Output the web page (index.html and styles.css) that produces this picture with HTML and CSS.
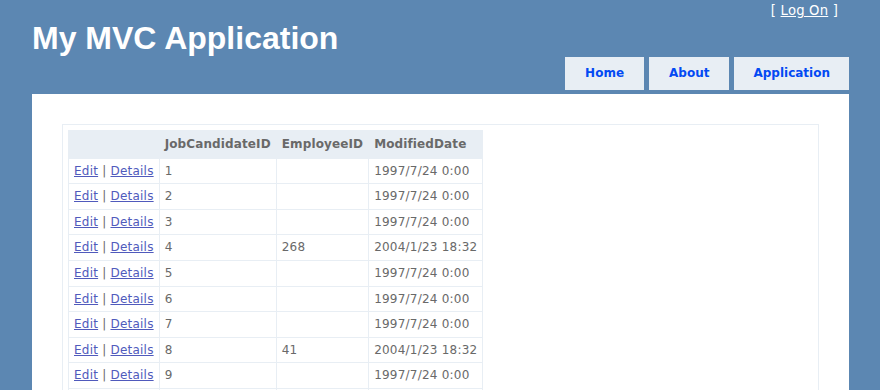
FILE: index.html
```html
<!DOCTYPE html>
<html lang="en">
<head>
    <meta charset="UTF-8">
    <title>Index</title>
    <link rel="stylesheet" href="styles.css">
</head>
<body>

<div class="page">
    <div class="header">
        <div class="title">
            <h1>My MVC Application</h1>
        </div>
        <div class="header-right">
            <div class="logindisplay">[ <a href="#">Log On</a> ]</div>
            <ul class="menu">
                <li><a href="#">Home</a></li>
                <li><a href="#">About</a></li>
                <li><a href="#">Application</a></li>
            </ul>
        </div>
    </div>

    <div class="main">
        <div class="grid-box">
            <table>
                <tr>
                    <th></th>
                    <th>JobCandidateID</th>
                    <th>EmployeeID</th>
                    <th>ModifiedDate</th>
                </tr>
                <tr><td><a href="#">Edit</a> | <a href="#">Details</a></td><td>1</td><td></td><td>1997/7/24 0:00</td></tr>
                <tr><td><a href="#">Edit</a> | <a href="#">Details</a></td><td>2</td><td></td><td>1997/7/24 0:00</td></tr>
                <tr><td><a href="#">Edit</a> | <a href="#">Details</a></td><td>3</td><td></td><td>1997/7/24 0:00</td></tr>
                <tr><td><a href="#">Edit</a> | <a href="#">Details</a></td><td>4</td><td>268</td><td>2004/1/23 18:32</td></tr>
                <tr><td><a href="#">Edit</a> | <a href="#">Details</a></td><td>5</td><td></td><td>1997/7/24 0:00</td></tr>
                <tr><td><a href="#">Edit</a> | <a href="#">Details</a></td><td>6</td><td></td><td>1997/7/24 0:00</td></tr>
                <tr><td><a href="#">Edit</a> | <a href="#">Details</a></td><td>7</td><td></td><td>1997/7/24 0:00</td></tr>
                <tr><td><a href="#">Edit</a> | <a href="#">Details</a></td><td>8</td><td>41</td><td>2004/1/23 18:32</td></tr>
                <tr><td><a href="#">Edit</a> | <a href="#">Details</a></td><td>9</td><td></td><td>1997/7/24 0:00</td></tr>
                <tr><td><a href="#">Edit</a> | <a href="#">Details</a></td><td>10</td><td></td><td>1997/7/24 0:00</td></tr>
                <tr><td><a href="#">Edit</a> | <a href="#">Details</a></td><td>11</td><td></td><td>1997/7/24 0:00</td></tr>
                <tr><td><a href="#">Edit</a> | <a href="#">Details</a></td><td>12</td><td></td><td>1997/7/24 0:00</td></tr>
                <tr><td><a href="#">Edit</a> | <a href="#">Details</a></td><td>13</td><td></td><td>1997/7/24 0:00</td></tr>
            </table>
        </div>
    </div>
</div>

</body>
</html>
```

FILE: styles.css
```css
body {
    background-color: #5c87b2;
    font-size: 12px;
    font-family: "DejaVu Sans", Verdana, Tahoma, Arial, sans-serif;
    margin: 0;
    padding: 0;
    color: #696969;
}
a {
    color: #505abc;
    text-decoration: underline;
}
.page {
    margin: 0 31px 0 32px;
}
.header {
    display: flex;
    justify-content: space-between;
}
.title h1 {
    font-weight: bold;
    padding: 6px 0 4px;
    margin: 0;
    color: #fff;
    line-height: 64px;
    font-family: "Liberation Sans", Arial, Helvetica, sans-serif;
    font-size: 32px;
}
.header-right {
    display: flex;
    flex-direction: column;
    align-items: flex-end;
}
.logindisplay {
    font-size: 13.2px;
    line-height: 16px;
    letter-spacing: 0.2px;
    margin: 3px 11px 0 0;
    color: #fff;
}
.logindisplay a {
    color: #fff;
}
.menu {
    display: flex;
    gap: 5px;
    list-style: none;
    margin: 38px 0 0;
    padding: 0 0 4px;
}
.menu a {
    display: block;
    padding: 9px 20px;
    line-height: 15px;
    font-weight: bold;
    text-decoration: none;
    background-color: #e8eef4;
    color: #034af3;
}
.menu li:last-child a {
    padding: 9px 19px;
}
.main {
    padding: 30px 30px 15px 30px;
    background-color: #fff;
    margin-bottom: 30px;
}
.grid-box {
    border: 1px solid #e8eef4;
    padding: 5px;
}
table {
    border: solid 1px #e8eef4;
    border-collapse: collapse;
}
table td {
    padding: 5px;
    line-height: 14.6px;
    letter-spacing: 0.22px;
    border: solid 1px #e8eef4;
}
table th {
    padding: 6px 5px;
    line-height: 14.6px;
    letter-spacing: 0.12px;
    text-align: left;
    background-color: #e8eef4;
    border: solid 1px #e8eef4;
}
```
